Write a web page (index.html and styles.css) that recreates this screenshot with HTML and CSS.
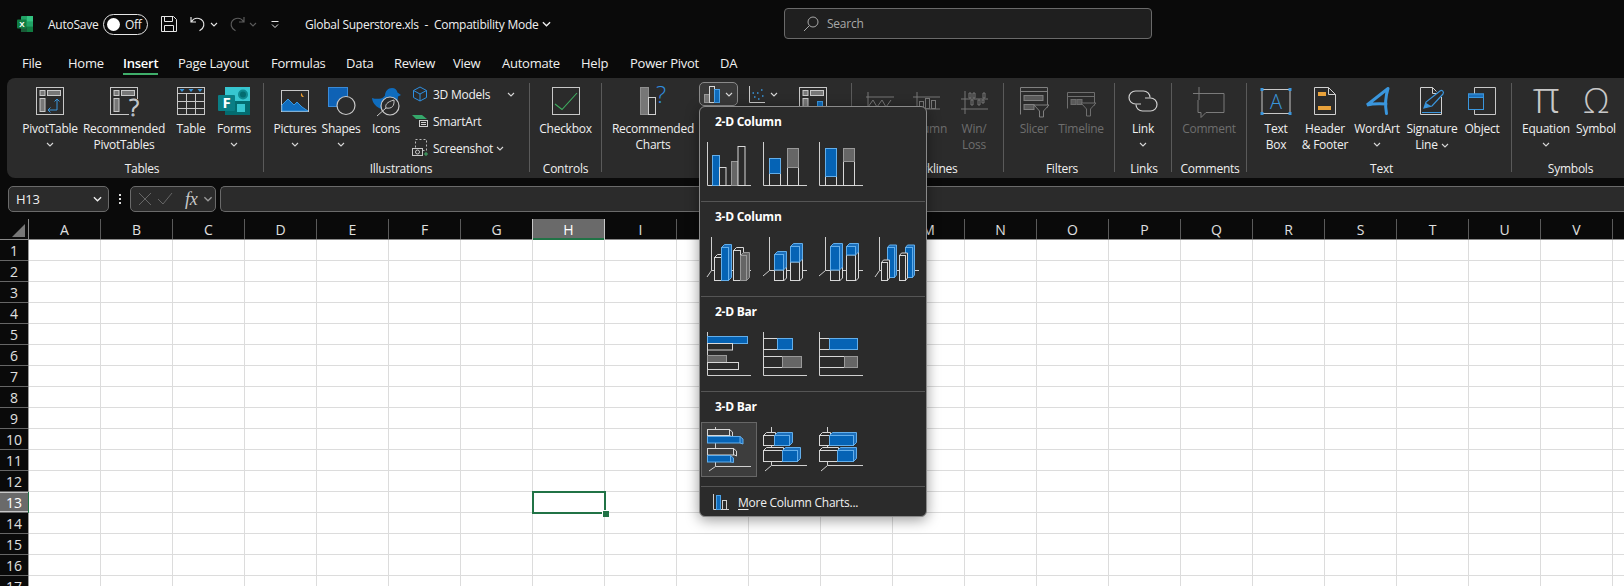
FILE: index.html
```html
<!DOCTYPE html>
<html lang="en">
<head>
  <meta charset="UTF-8">
  <title>Global Superstore.xls - Excel</title>
  <link rel="stylesheet" href="styles.css">
</head>
<body>
  <svg class="defs" width="0" height="0">
    <defs>
      <symbol id="chev" viewBox="0 0 8 5"><path d="M1 1l3 3 3-3" fill="none" stroke="currentColor" stroke-width="1.1"/></symbol>
    </defs>
  </svg>

  <header class="titlebar">
    <svg class="logo" width="16" height="16" viewBox="0 0 16 16">
      <rect x="4" width="12" height="16" rx="1" fill="#21a366"/>
      <rect x="10" width="6" height="5.4" fill="#33c481"/>
      <rect x="10" y="10.6" width="6" height="5.4" fill="#107c41"/>
      <rect x="4" y="10.6" width="6" height="5.4" fill="#185c37"/>
      <rect y="3.5" width="9.5" height="9" rx="1" fill="#107c41"/>
      <text x="4.7" y="10.8" class="logo-x">X</text>
    </svg>
    <span class="autosave">AutoSave</span>
    <span class="toggle"><i class="knob"></i>Off</span>
    <svg class="qa-save" width="16" height="16" viewBox="0 0 16 16" fill="none" stroke="#e6e6e6"><path d="M.5.5h12l3 3v12H.5zM3.5.5v5h8v-5M3.5 15.500v-6h9v6"/></svg>
    <svg class="qa-undo" width="16" height="16" viewBox="0 0 16 16" fill="none" stroke="#e6e6e6" stroke-width="1.2"><path d="M1 1v5h5M1.3 6C3 3 6 1.8 9 2.5c3.500.8 5.500 4 4.700 7.300-.5 2.300-2.300 4-4.200 5"/></svg>
    <svg class="qa-chev" width="8" height="5"><use href="#chev"/></svg>
    <svg class="qa-redo" width="16" height="16" viewBox="0 0 16 16" fill="none" stroke="#5c5c5c" stroke-width="1.2"><path d="M15 1v5h-5M14.700 6C13 3 10 1.800 7 2.500 3.500 3.300 1.500 6.500 2.300 9.800c.5 2.300 2.300 4 4.200 5"/></svg>
    <svg class="qa-chev dim" width="8" height="5"><use href="#chev"/></svg>
    <svg class="qa-custom" width="10" height="9" viewBox="0 0 10 9" fill="none" stroke="#e6e6e6"><path d="M1.500 1.500h7M2 4.500l3 3 3-3"/></svg>
    <span class="doc-title">Global Superstore.xls&nbsp; - &nbsp;Compatibility Mode</span>
    <svg class="doc-chev" width="11" height="6"><use href="#chev"/></svg>
    <div class="search">
      <svg width="16" height="16" viewBox="0 0 16 16" fill="none" stroke="#a8a8a8"><circle cx="10" cy="6" r="5"/><path d="M6.300 9.700L1 15"/></svg>
      <span>Search</span>
    </div>
  </header>

  <nav class="tabs">
    <a class="tab-file">File</a>
    <a class="tab-home">Home</a>
    <a class="tab-insert active">Insert</a>
    <a class="tab-layout">Page Layout</a>
    <a class="tab-formulas">Formulas</a>
    <a class="tab-data">Data</a>
    <a class="tab-review">Review</a>
    <a class="tab-view">View</a>
    <a class="tab-automate">Automate</a>
    <a class="tab-help">Help</a>
    <a class="tab-pivot">Power Pivot</a>
    <a>DA</a>
  </nav>

  <section class="ribbon">
    <!-- Tables -->
    <div class="group g-tables">
      <div class="cmds">
        <div class="cmd w58">
          <svg class="ico" viewBox="0 0 32 30" fill="none" stroke="#c8c8c8"><rect x="2.5" y=".5" width="27" height="27"/><rect x="6" y="3.5" width="5" height="5" fill="#777"/><rect x="13.5" y="3.5" width="13" height="5" fill="#777"/><rect x="6" y="11.5" width="5" height="13" fill="#777"/><path d="M23 12v11h-9M20.500 14.500L23 12l2.500 2.500M16.500 20.500L14 23l2.500 2.500" stroke="#3a96dd"/></svg>
          <span>PivotTable</span><svg class="chev" width="8" height="5"><use href="#chev"/></svg>
        </div>
        <div class="cmd w90">
          <svg class="ico" viewBox="0 0 32 30" fill="none" stroke="#c8c8c8"><rect x="2.5" y=".5" width="27" height="27"/><rect x="6" y="3.5" width="5" height="5" fill="#777"/><rect x="13.5" y="3.500" width="13" height="5" fill="#777"/><rect x="6" y="11.5" width="5" height="13" fill="#777"/><rect x="21" y="12" width="11" height="18" fill="#2b2b2b" stroke="none"/><text x="21" y="29" class="qmark">?</text></svg>
          <span>Recommended PivotTables</span>
        </div>
        <div class="cmd w44">
          <svg class="ico" viewBox="0 0 32 30" fill="none" stroke="#c8c8c8"><rect x="2.5" y=".5" width="27" height="27"/><path d="M2.500 6.500h27M2.500 14.500h27M2.500 21.500h27M11.500 6.500v21M20.500 6.500v21"/><path d="M4.500 2h5L7 5zM13.500 2h5L16 5zM22.500 2h5L25 5z" fill="#3a96dd" stroke="none"/></svg>
          <span>Table</span>
        </div>
        <div class="cmd w42">
          <svg class="ico" viewBox="0 0 32 30"><rect x="7" y="0" width="25" height="14" fill="#37c6d0"/><rect x="7" y="14" width="25" height="14" fill="#036c70"/><circle cx="25" cy="7.5" r="5" fill="#0f8a90"/><circle cx="25" cy="7.5" r="3" fill="#036c70"/><rect x="19" y="17" width="8" height="8" fill="#37c6d0"/><rect x="0" y="8" width="17" height="16" rx="1" fill="#0a7e85"/><text x="4.5" y="21" class="forms-f">F</text></svg>
          <span>Forms</span><svg class="chev" width="8" height="5"><use href="#chev"/></svg>
        </div>
      </div>
      <div class="glabel">Tables</div>
    </div>
    <!-- Illustrations -->
    <div class="group g-illus">
      <div class="cmds">
        <div class="cmd w44">
          <svg class="ico" viewBox="0 0 32 30" fill="none" stroke="#c8c8c8"><rect x="2.5" y="3.5" width="27" height="21"/><path d="M3 24v-6l6-6 6 6 3-3 5 5 6 4z" fill="#0f6cbd" stroke="#3a96dd"/><path d="M23 6c-1.500.8-1.500 3 0 3.800.8.4 1.800.2 2.300-.3-1.500 0-2.500-2-2.300-3.500z" fill="#f0a030" stroke="none"/></svg>
          <span>Pictures</span><svg class="chev" width="8" height="5"><use href="#chev"/></svg>
        </div>
        <div class="cmd w48">
          <svg class="ico" viewBox="0 0 32 30" fill="none"><rect x="3.5" y=".5" width="19" height="19" fill="#0f62b5" stroke="#3a8bd8"/><circle cx="21" cy="18.5" r="9" fill="#2b2b2b" stroke="#c8c8c8" stroke-width="1.2"/></svg>
          <span>Shapes</span><svg class="chev" width="8" height="5"><use href="#chev"/></svg>
        </div>
        <div class="cmd w42">
          <svg class="ico" viewBox="0 0 32 30" fill="none"><path d="M2 11c3 1 6 1 9 .5 2-.5 3-2 4-3 0-4 3-7.500 7-7.500 3 0 5 2 5.500 4.500L31 8l-3 1.500c0 4-1.500 8-5 11-2 1.500-9 3-13 1-5-2.500-7.500-6-8-10.500z" fill="#0f6cbd"/><circle cx="20" cy="19" r="9" fill="#2b2b2b" stroke="#c8c8c8" stroke-width="1.2"/><path d="M7 29l9-8M16 21c-1-3 .5-6 8-8 .5 6-2 9-8 8z" stroke="#c8c8c8" fill="#2b2b2b"/></svg>
          <span>Icons</span>
        </div>
        <div class="stack">
          <div class="mini">
            <svg width="16" height="16" viewBox="0 0 16 16" fill="none" stroke="#2f8fe0"><path d="M8 1l6.500 3.500v7L8 15l-6.500-3.500v-7zM1.500 4.500L8 8l6.500-3.500M8 8v7"/></svg>
            <span>3D Models</span><svg class="chev far" width="8" height="5"><use href="#chev"/></svg>
          </div>
          <div class="mini">
            <svg width="16" height="16" viewBox="0 0 16 16" fill="none"><path d="M0 2h10l5 4H4z" fill="#35a86b"/><rect x="7.5" y="7.5" width="8" height="6" fill="#2b2b2b" stroke="#d0d0d0"/><path d="M9 9.500h5M9 11.500h5" stroke="#d0d0d0"/></svg>
            <span>SmartArt</span>
          </div>
          <div class="mini">
            <svg width="16" height="18" viewBox="0 0 16 18" fill="none"><rect x="3.5" y=".5" width="11" height="11" stroke="#b8b8b8" stroke-dasharray="2 2"/><rect x=".5" y="9.5" width="10" height="7" fill="#2b2b2b" stroke="#c8c8c8"/><circle cx="5.5" cy="13" r="2" stroke="#c8c8c8"/><path d="M12 15h4M14 13v4" stroke="#45b06c"/></svg>
            <span>Screenshot</span><svg class="chev near" width="8" height="5"><use href="#chev"/></svg>
          </div>
        </div>
      </div>
      <div class="glabel">Illustrations</div>
    </div>
    <!-- Controls -->
    <div class="group g-controls">
      <div class="cmds">
        <div class="cmd w71">
          <svg class="ico" viewBox="0 0 32 30" fill="none"><rect x="2.5" y=".5" width="27" height="27" stroke="#c8c8c8"/><path d="M5 17l7 5.500L27 6" stroke="#3fae60" stroke-width="1.100"/></svg>
          <span>Checkbox</span>
        </div>
      </div>
      <div class="glabel">Controls</div>
    </div>
    <!-- Charts, mostly under the open menu -->
    <div class="group g-charts">
      <div class="cmds">
        <div class="cmd w92">
          <svg class="ico" viewBox="0 0 32 30" fill="none"><rect x="3.5" y=".5" width="8" height="27" fill="#777" stroke="#909090"/><rect x="11.5" y="10.5" width="7" height="17" stroke="#d0d0d0"/><text x="19" y="16" class="qmark">?</text></svg>
          <span>Recommended Charts</span>
        </div>
        <div class="chart-mini">
          <div class="tool open">
            <svg width="16" height="17" viewBox="0 0 16 17" fill="none"><rect x=".5" y="8.5" width="5" height="8" fill="#777" stroke="#999"/><rect x="5.5" y=".5" width="5" height="16" stroke="#d8d8d8"/><rect x="10.500" y="3.5" width="5" height="13" fill="#0f6cbd" stroke="#4da3e8"/></svg>
            <svg class="chev" width="8" height="5"><use href="#chev"/></svg>
          </div>
          <div class="tool">
            <svg width="16" height="17" viewBox="0 0 16 17" fill="none"><path d="M.5 0v16.500H16" stroke="#c8c8c8"/><path d="M5 11h1.500M8 7h1.500M3.500 7h1.500M9 13h1.500M12 4h1.500M13 10h1.500" stroke="#3a96dd" stroke-width="1.500"/></svg>
            <svg class="chev" width="8" height="5"><use href="#chev"/></svg>
          </div>
        </div>
        <div class="cmd w60">
          <svg class="ico" viewBox="0 0 32 30" fill="none" stroke="#c8c8c8"><rect x="2.5" y=".5" width="27" height="27"/><rect x="6" y="3.5" width="5" height="5" fill="#777"/><rect x="13.5" y="3.5" width="13" height="5" fill="#777"/><rect x="6" y="11.5" width="5" height="13" fill="#777"/><rect x="20.5" y="14.5" width="5" height="13" fill="#0f6cbd" stroke="#3a96dd"/></svg>
        </div>
      </div>
      <div class="glabel"></div>
    </div>
    <!-- Sparklines -->
    <div class="group g-spark off">
      <div class="cmds">
        <div class="cmd w46">
          <svg class="ico" viewBox="0 0 32 30" fill="none" stroke="#777"><path d="M4 5v22M2 10h28M4 20l5-7 4 7 5-7 4 7 5-7"/></svg>
        </div>
        <div class="cmd w46">
          <svg class="ico" viewBox="0 0 32 30" fill="none" stroke="#777"><path d="M7 5v22M3 10h27M3 22h27"/><rect x="9.5" y="14.5" width="4" height="7"/><rect x="15.5" y="11.5" width="4" height="10"/><rect x="21.5" y="13.5" width="4" height="8"/></svg>
          <span>Column</span>
        </div>
        <div class="cmd w50">
          <svg class="ico" viewBox="0 0 32 30" fill="none" stroke="#777"><path d="M7 4v23M3 12h27M3 22h27M11 6v5h2V6zM15 6v5h2V6zM25 6v5h2V6zM20 13v5h2v-5zM24 13v3h2v-3zM13 13v5h2v-5z"/></svg>
          <span>Win/ Loss</span>
        </div>
      </div>
      <div class="glabel">Sparklines</div>
    </div>
    <!-- Filters -->
    <div class="group g-filters off">
      <div class="cmds">
        <div class="cmd w48">
          <svg class="ico" viewBox="0 0 32 30" fill="none" stroke="#808080"><path d="M2.500 27.500V.5h27v20M2.500 4.500h27"/><rect x="6" y="8.5" width="19" height="5" fill="#5a5a5a"/><rect x="6" y="17.5" width="10" height="5" fill="#5a5a5a"/><path d="M16 18h15l-5.500 6v6h-4v-6z" fill="#2b2b2b"/></svg>
          <span>Slicer</span>
        </div>
        <div class="cmd w46">
          <svg class="ico" viewBox="0 0 32 30" fill="none" stroke="#6e6e6e"><path d="M2.500 21.500V5.500h27v13M2.500 9.500h27"/><rect x="6" y="12.5" width="5" height="5" fill="#5a5a5a"/><rect x="12" y="12.5" width="5" height="5" fill="#5a5a5a"/><path d="M16 16h15l-5.500 6v7h-4v-7z" fill="#2b2b2b"/></svg>
          <span>Timeline</span>
        </div>
      </div>
      <div class="glabel">Filters</div>
    </div>
    <!-- Links -->
    <div class="group g-links">
      <div class="cmds">
        <div class="cmd w52">
          <svg class="ico" viewBox="0 0 32 30" fill="none" stroke="#d0d0d0" stroke-width="1.2"><path d="M14 17H8.500a6.500 6.500 0 0 1 0-13h8a6.500 6.500 0 0 1 6.500 6.500"/><path d="M18 11h5.500a6.500 6.500 0 0 1 0 13h-8a6.500 6.500 0 0 1-6.500-6.500"/></svg>
          <span>Link</span><svg class="chev" width="8" height="5"><use href="#chev"/></svg>
        </div>
      </div>
      <div class="glabel">Links</div>
    </div>
    <!-- Comments -->
    <div class="group g-comments">
      <div class="cmds">
        <div class="cmd w70 off">
          <svg class="ico" viewBox="0 0 32 30" fill="none" stroke="#7a7a7a"><path d="M8 6.500h23v19H13l-5 5v-5H5V13"/><path d="M6 0v13M0 6.500h13"/></svg>
          <span>Comment</span>
        </div>
      </div>
      <div class="glabel">Comments</div>
    </div>
    <!-- Text -->
    <div class="group g-text">
      <div class="cmds">
        <div class="cmd w48">
          <svg class="ico" viewBox="0 0 32 30" fill="none"><rect x="2" y="2.5" width="28" height="24" stroke="#c8c8c8"/><path d="M.5 1h3v3h-3zM28.500 1h3v3h-3zM.5 25h3v3h-3zM28.500 25h3v3h-3z" fill="#3a96dd"/><text x="16" y="22" class="tb-a">A</text></svg>
          <span>Text<br>Box</span>
        </div>
        <div class="cmd w50">
          <svg class="ico" viewBox="0 0 32 30" fill="none"><path d="M5.500.5h14l7 7v20h-21zM19.500.5v7h7" stroke="#d0d0d0" fill="#2b2b2b"/><rect x="9" y="5" width="8" height="4" fill="#e9a23b"/><rect x="9" y="19" width="13" height="4" fill="#e9a23b"/></svg>
          <span>Header<br>&amp; Footer</span>
        </div>
        <div class="cmd w54">
          <svg class="ico" viewBox="0 0 32 30" fill="none" stroke="#3a96dd" stroke-width="3" stroke-linecap="round"><path d="M27 1.500L6 18c6-1.500 12-1.500 19-1M27 1.500c-2.500 8-3 17-1.500 25"/></svg>
          <span>WordArt</span><svg class="chev" width="8" height="5"><use href="#chev"/></svg>
        </div>
        <div class="cmd w56 sig">
          <svg class="ico" viewBox="0 0 32 30" fill="none"><path d="M25.500 10v17.500h-21V.5h12l4 4" stroke="#d0d0d0"/><path d="M16.500.5v6h6" stroke="#d0d0d0"/><path d="M8 21l2-6L24 4c2-1.500 4.500 1 3 3L16 19z" stroke="#3a96dd" stroke-width="1.2" fill="#2b2b2b"/><path d="M8 21l2-5 5 3z" fill="#3a96dd"/><path d="M6 25.500h19" stroke="#3a96dd"/></svg>
          <span>Signature Line<svg class="chev inl" width="8" height="5"><use href="#chev"/></svg></span>
        </div>
        <div class="cmd w44">
          <svg class="ico" viewBox="0 0 32 30" fill="none"><path d="M8.500 7V.5h21v27h-21V23" stroke="#c8c8c8"/><rect x="2.5" y="7" width="15" height="15.5" fill="#2b2b2b" stroke="#3a96dd"/><rect x="2.5" y="7" width="15" height="3.5" fill="#1b6fba" stroke="#3a96dd"/></svg>
          <span>Object</span>
        </div>
      </div>
      <div class="glabel">Text</div>
    </div>
    <!-- Symbols -->
    <div class="group g-symbols">
      <div class="cmds">
        <div class="cmd w54">
          <svg class="ico" viewBox="0 0 32 30"><text x="16" y="26" class="sym-pi">π</text></svg>
          <span>Equation</span><svg class="chev" width="8" height="5"><use href="#chev"/></svg>
        </div>
        <div class="cmd w46">
          <svg class="ico" viewBox="0 0 32 30"><text x="16" y="26" class="sym-om">Ω</text></svg>
          <span>Symbol</span>
        </div>
      </div>
      <div class="glabel">Symbols</div>
    </div>
  </section>

  <section class="fbar">
    <div class="namebox"><span>H13</span><svg width="11" height="6"><use href="#chev"/></svg></div>
    <div class="dots"><i></i><i></i><i></i></div>
    <div class="fbtns">
      <svg width="14" height="14" viewBox="0 0 14 14" stroke="#666" fill="none"><path d="M1 1l12 12M13 1L1 13"/></svg>
      <svg width="16" height="14" viewBox="0 0 16 14" stroke="#666" fill="none"><path d="M1 7l5 5L15 1"/></svg>
      <em>fx</em>
      <svg width="10" height="6"><use href="#chev"/></svg>
    </div>
    <div class="finput"></div>
  </section>

  <main class="sheet">
    <div class="colhead">
      <div class="corner"><i></i></div>
      <div>A</div><div>B</div><div>C</div><div>D</div><div>E</div><div>F</div><div>G</div><div class="sel">H</div><div>I</div><div></div><div></div><div></div><div>M</div><div>N</div><div>O</div><div>P</div><div>Q</div><div>R</div><div>S</div><div>T</div><div>U</div><div>V</div><div></div>
    </div>
    <div class="body">
      <div class="rowhead">
        <div>1</div><div>2</div><div>3</div><div>4</div><div>5</div><div>6</div><div>7</div><div>8</div><div>9</div><div>10</div><div>11</div><div>12</div><div class="sel">13</div><div>14</div><div>15</div><div>16</div><div>17</div>
      </div>
      <div class="cells"><div class="cursor"><i></i></div></div>
    </div>
  </main>

  <!-- chart dropdown -->
  <div class="menu">
    <h4>2-D Column</h4>
    <div class="tiles">
      <div class="tile"><svg viewBox="0 0 44 44"><path class="ax" d="M.5 0v43.500H44"/><rect class="bl" x="5.5" y="13.5" width="7" height="30"/><rect class="wh" x="12.5" y="25.5" width="6.5" height="18"/><rect class="gr" x="24.5" y="19.5" width="6.5" height="24"/><rect class="wh" x="31" y="4.5" width="7" height="39"/></svg></div>
      <div class="tile"><svg viewBox="0 0 44 44"><path class="ax" d="M.5 0v43.500H44"/><rect class="wh" x="6.5" y="31" width="11" height="12.5"/><rect class="bl" x="6.5" y="16.5" width="11" height="15"/><rect class="wh" x="24.5" y="25" width="11" height="18.5"/><rect class="gr" x="24.5" y="6.5" width="11" height="19"/></svg></div>
      <div class="tile"><svg viewBox="0 0 44 44"><path class="ax" d="M.5 0v43.500H44"/><rect class="wh" x="6.5" y="34" width="11" height="9.5"/><rect class="bl" x="6.5" y="6.5" width="11" height="28"/><rect class="wh" x="24.5" y="19" width="11" height="24.5"/><rect class="gr" x="24.5" y="6.5" width="11" height="13"/></svg></div>
    </div>
    <hr>
    <h4>3-D Column</h4>
    <div class="tiles">
      <div class="tile"><svg viewBox="0 0 44 44"><path class="ax" d="M4.500 0v33.500H44M4.500 33.500L0 40"/>
        <path class="wh" d="M7.500 20.500l3-3h7v23l-3 3v-23z"/><rect class="wh" x="7.5" y="20.5" width="7" height="23"/>
        <path class="bl2" d="M14.500 10.500l3-3h7v33l-3 3v-33z"/><rect class="bl" x="14.5" y="10.5" width="7" height="33"/>
        <path class="wh" d="M26.500 13.500l3-3h7v30l-3 3v-30z"/><rect class="wh" x="26.5" y="13.5" width="7" height="30"/>
        <path class="gr" d="M33.500 18.500l3-3h6v25l-3 3v-25z"/><rect class="gr" x="33.5" y="18.5" width="6" height="25"/></svg></div>
      <div class="tile"><svg viewBox="0 0 44 44"><path class="ax" d="M6.500 0v33.500H44M6.500 33.500L0 39"/>
        <path class="wh" d="M11.500 33l3-3h9v11l-3 3V33z"/><rect class="wh" x="11.5" y="33" width="9" height="10.500"/>
        <path class="bl2" d="M11.500 17.500l3-3h9V30l-3 3V17.500z"/><rect class="bl" x="11.5" y="17.5" width="9" height="15.5"/>
        <path class="wh" d="M27.500 25l3-3h9v19l-3 3V25z"/><rect class="wh" x="27.5" y="25" width="9" height="18.5"/>
        <path class="bl2" d="M27.500 9.500l3-3h9V22l-3 3V9.500z"/><rect class="bl" x="27.5" y="9.5" width="9" height="15.5"/></svg></div>
      <div class="tile"><svg viewBox="0 0 44 44"><path class="ax" d="M6.500 0v33.500H44M6.500 33.500L0 39"/>
        <path class="wh" d="M11.500 33l3-3h9v11l-3 3V33z"/><rect class="wh" x="11.5" y="33" width="9" height="10.500"/>
        <path class="bl2" d="M11.500 9.500l3-3h9V30l-3 3V9.500z"/><rect class="bl" x="11.5" y="9.5" width="9" height="23.5"/>
        <path class="wh" d="M27.500 18l3-3h9v26l-3 3V18z"/><rect class="wh" x="27.5" y="18" width="9" height="25.5"/>
        <path class="bl2" d="M27.500 9.500l3-3h9V15l-3 3V9.500z"/><rect class="bl" x="27.5" y="9.5" width="9" height="8.5"/></svg></div>
      <div class="tile"><svg viewBox="0 0 44 44"><path class="ax" d="M4.500 0v33.500H44M4.500 33.500L0 40"/>
        <path class="bl2" d="M12.500 10.500l2-2.500h7v30l-2 2.500V10.500z"/><rect class="bl" x="12.5" y="10.5" width="7" height="30"/>
        <path class="wh" d="M6.500 25.500l2-2.500h6v18l-2 2.500V25.500z"/><rect class="wh" x="6.500" y="25.5" width="6" height="18"/>
        <path class="bl2" d="M30.500 10.500l2-2.500h7v30l-2 2.500V10.500z"/><rect class="bl" x="30.5" y="10.5" width="7" height="30"/>
        <path class="wh" d="M24.500 18.500l2-2.500h6v25l-2 2.500V18.500z"/><rect class="wh" x="24.500" y="18.5" width="6" height="25"/></svg></div>
    </div>
    <hr>
    <h4>2-D Bar</h4>
    <div class="tiles">
      <div class="tile"><svg viewBox="0 0 44 44"><path class="ax" d="M.5 0v43.500H44"/><rect class="bl" x=".5" y="4.5" width="40" height="7"/><rect class="wh" x=".5" y="11.5" width="25" height="6.5"/><rect class="gr" x=".5" y="23.5" width="19" height="7"/><rect class="wh" x=".5" y="30.5" width="31" height="7"/></svg></div>
      <div class="tile"><svg viewBox="0 0 44 44"><path class="ax" d="M.5 0v43.500H44"/><rect class="wh" x=".5" y="6.5" width="14" height="11"/><rect class="bl" x="14.5" y="6.5" width="15" height="11"/><rect class="wh" x=".5" y="24.5" width="19" height="11"/><rect class="gr" x="19.5" y="24.5" width="19" height="11"/></svg></div>
      <div class="tile"><svg viewBox="0 0 44 44"><path class="ax" d="M.5 0v43.500H44"/><rect class="wh" x=".5" y="6.5" width="10" height="11"/><rect class="bl" x="10.5" y="6.5" width="28" height="11"/><rect class="wh" x=".5" y="24.5" width="25" height="11"/><rect class="gr" x="25.5" y="24.5" width="13" height="11"/></svg></div>
    </div>
    <hr>
    <h4>3-D Bar</h4>
    <div class="tiles">
      <div class="tile hot"><svg viewBox="0 0 44 44"><path class="ax" d="M8.500 0v39.500H44M8.500 39.500L2 44"/>
        <path class="wh" d="M.5 2.500h22l3 2.500v5l-3-1.500"/><rect class="wh" x=".5" y="2.5" width="22" height="6"/>
        <path class="bl2" d="M33 9.500l3 2.500v5l-3-1"/><rect class="bl" x=".5" y="9.5" width="32.5" height="6.5"/>
        <path class="wh" d="M.5 21.500h26l3 2.500v5l-3-1.500"/><rect class="wh" x=".5" y="21.5" width="26" height="6.5"/>
        <path class="bl2" d="M23.500 28.500l3 2.500v4.500l-3-.5"/><rect class="bl" x=".5" y="28.5" width="23" height="6.5"/></svg></div>
      <div class="tile"><svg viewBox="0 0 44 44"><path class="ax" d="M8.500 0v38.500H44M8.500 38.500L2 44"/>
        <path class="wh" d="M.5 8.500l3-3h9v10l-3 3H.5z"/><rect class="wh" x=".5" y="8.5" width="11" height="10"/>
        <path class="bl2" d="M11.500 8.500l3-3h15v10l-3 3V8.500z"/><rect class="bl" x="11.5" y="8.5" width="15" height="10"/>
        <path class="wh" d="M.5 23.500l3-3h17v11l-3 3H.5z"/><rect class="wh" x=".5" y="23.5" width="19" height="11"/>
        <path class="bl2" d="M19.500 23.500l3-3h15v11l-3 3V23.500z"/><rect class="bl" x="19.5" y="23.5" width="15" height="11"/></svg></div>
      <div class="tile"><svg viewBox="0 0 44 44"><path class="ax" d="M8.500 0v38.500H44M8.500 38.500L2 44"/>
        <path class="wh" d="M.5 8.500l3-3h8v10l-3 3H.5z"/><rect class="wh" x=".5" y="8.5" width="10" height="10"/>
        <path class="bl2" d="M10.500 8.500l3-3h24v10l-3 3V8.500z"/><rect class="bl" x="10.5" y="8.5" width="24" height="10"/>
        <path class="wh" d="M.5 23.500l3-3h16v11l-3 3H.5z"/><rect class="wh" x=".5" y="23.5" width="18" height="11"/>
        <path class="bl2" d="M18.500 23.500l3-3h16v11l-3 3V23.500z"/><rect class="bl" x="18.5" y="23.5" width="16" height="11"/></svg></div>
    </div>
    <hr>
    <div class="more">
      <svg width="16" height="16" viewBox="0 0 16 16" fill="none"><path d="M.5 0v15.500H16" stroke="#d0d0d0"/><rect x="3.5" y="1.5" width="4" height="14" fill="#0f6cbd" stroke="#4da3e8"/><rect x="9.5" y="6.5" width="4" height="9" stroke="#d0d0d0"/></svg>
      <span><u>M</u>ore Column Charts...</span>
    </div>
  </div>
</body>
</html>
```
FILE: styles.css
```css
* {
  box-sizing: border-box;
}
html, body {
  height: 586px;
  overflow: hidden;
}
body {
  margin: 0;
  position: relative;
  background: #0a0a0a;
  color: #f0f0f0;
  font-family: "Open Sans", "Noto Sans", sans-serif;
  font-size: 12px;
  letter-spacing: -0.25px;
}
.defs {
  position: absolute;
}
svg {
  display: block;
  flex: none;
}

/* title bar */
.titlebar {
  height: 48px;
  display: flex;
  align-items: center;
  padding-left: 17px;
}
.logo-x {
  font: bold 8px "Liberation Sans", sans-serif;
  fill: #fff;
  text-anchor: middle;
}
.autosave {
  width: 48px;
  margin-left: 15px;
}
.toggle {
  width: 45px;
  height: 21px;
  margin-left: 7px;
  border: 1px solid #e6e6e6;
  border-radius: 11px;
  display: flex;
  align-items: center;
  padding: 0 3px;
  gap: 5px;
}
.knob {
  width: 13px;
  height: 13px;
  border-radius: 50%;
  background: #fff;
}
.qa-save { margin-left: 13px; }
.qa-undo { margin-left: 13px; }
.qa-chev { margin-left: 4px; color: #e6e6e6; }
.qa-chev.dim { color: #5c5c5c; }
.qa-redo { margin-left: 11px; }
.qa-custom { margin-left: 13px; }
.doc-title {
  width: 233px;
  margin-left: 25px;
  white-space: nowrap;
}
.doc-chev {
  margin-left: 3px;
  color: #f0f0f0;
}
.search {
  margin-left: 232px;
  width: 368px;
  height: 31px;
  margin-top: -1px;
  background: #1f1f1f;
  border: 1px solid #6a6a6a;
  border-radius: 4px;
  display: flex;
  align-items: center;
  gap: 8px;
  padding-left: 18px;
  color: #a8a8a8;
}

/* tabs */
.tabs {
  height: 30px;
  display: flex;
  align-items: center;
  padding-left: 22px;
  font-size: 13px;
}
.tabs a {
  position: relative;
  line-height: 20px;
  white-space: nowrap;
}
.tabs .active {
  font-weight: 600;
  color: #fff;
}
.tabs .active::after {
  content: "";
  position: absolute;
  left: 0;
  right: 0;
  bottom: -2px;
  height: 2px;
  background: #3fae6a;
}
.tab-file { width: 46px; }
.tab-home { width: 55px; }
.tab-insert { width: 35px; margin-right: 20px; }
.tab-layout { width: 93px; }
.tab-formulas { width: 75px; }
.tab-data { width: 48px; }
.tab-review { width: 59px; }
.tab-view { width: 49px; }
.tab-automate { width: 79px; }
.tab-help { width: 49px; }
.tab-pivot { width: 90px; }

/* ribbon */
.ribbon {
  height: 100px;
  margin-left: 7px;
  background: #2b2b2b;
  border-radius: 8px 0 0 8px;
  display: flex;
  padding-top: 5px;
}
.group {
  height: 89px;
  border-right: 1px solid #5a5a5a;
  display: flex;
  flex-direction: column;
  flex: none;
}
.g-tables { width: 257px; padding-left: 14px; }
.g-illus { width: 266px; padding-left: 9px; }
.g-controls { width: 72px; }
.g-charts { width: 250px; padding-left: 5px; }
.g-spark { width: 152px; padding-left: 5px; }
.g-filters { width: 111px; padding-left: 6px; }
.g-links { width: 57px; padding-left: 2px; }
.g-comments { width: 75px; padding-left: 2px; }
.g-text { width: 265px; padding-left: 5px; }
.g-symbols { width: 110px; padding-left: 7px; border-right: 0; }
.cmds {
  display: flex;
  height: 78px;
  flex: none;
}
.glabel {
  text-align: center;
  line-height: 16px;
  white-space: nowrap;
}
.cmd {
  display: flex;
  flex-direction: column;
  align-items: center;
  text-align: center;
  line-height: 16px;
  padding-top: 4px;
  flex: none;
}
.cmd .ico {
  width: 32px;
  height: 30px;
  margin-bottom: 4px;
  overflow: visible;
}
.chev {
  color: #d8d8d8;
  margin-top: 5px;
}
.chev.inl {
  display: inline-block;
  margin: 0 0 1px 3px;
}
.w42 { width: 42px; }
.w44 { width: 44px; }
.w46 { width: 46px; }
.w48 { width: 48px; }
.w50 { width: 50px; }
.w52 { width: 52px; }
.w54 { width: 54px; }
.w56 { width: 56px; }
.w58 { width: 58px; }
.w60 { width: 60px; }
.w70 { width: 70px; }
.w71 { width: 71px; }
.w90 { width: 90px; }
.w92 { width: 92px; }
.off .cmd, .cmd.off {
  color: #6e6e6e;
}
.qmark {
  font: 300 24px "Open Sans", sans-serif;
  fill: #2f8fe0;
}
.forms-f {
  font: bold 15px "Open Sans", sans-serif;
  fill: #fff;
}
.tb-a {
  font: 300 20px "Open Sans", sans-serif;
  fill: #3a96dd;
  text-anchor: middle;
}
.sym-pi {
  font: 300 44px "Open Sans", sans-serif;
  fill: #c8c8c8;
  text-anchor: middle;
}
.sym-om {
  font: 300 34px "Open Sans", sans-serif;
  fill: #c8c8c8;
  text-anchor: middle;
}
.stack {
  width: 118px;
  padding: 1px 0 0 5px;
  display: flex;
  flex-direction: column;
  gap: 7px;
}
.mini {
  height: 20px;
  display: flex;
  align-items: center;
  gap: 5px;
  white-space: nowrap;
}
.mini .chev {
  margin: 0;
}
.mini .far {
  margin-left: 12px;
}
.mini .near {
  margin-left: -2px;
}
.chart-mini {
  width: 84px;
  display: flex;
  gap: 6px;
  align-items: flex-start;
  height: 24px;
  margin-top: -1px;
}
.tool {
  height: 24px;
  display: flex;
  align-items: center;
  gap: 5px;
  padding: 0 4px;
  border: 1px solid transparent;
  border-radius: 5px;
}
.tool .chev {
  margin: 0;
}
.tool.open {
  width: 40px;
  background: #3a3a3a;
  border-color: #8a8a8a;
}

/* formula bar */
.fbar {
  height: 26px;
  margin: 8px 0 0 8px;
  display: flex;
  color: #d0d0d0;
}
.namebox, .fbtns, .finput {
  height: 26px;
  border: 1px solid #6a6a6a;
  border-radius: 5px;
  background: #2b2b2b;
  display: flex;
  align-items: center;
}
.namebox {
  width: 101px;
  padding: 0 5px 0 7px;
  justify-content: space-between;
  font-size: 13px;
  color: #f0f0f0;
}
.dots {
  width: 21px;
  display: flex;
  flex-direction: column;
  align-items: center;
  justify-content: center;
  gap: 2px;
}
.dots i {
  width: 2px;
  height: 2px;
  background: #ddd;
}
.fbtns {
  width: 86px;
  padding-left: 7px;
  gap: 5px;
  color: #9a9a9a;
}
.fbtns em {
  font: italic 18px "Liberation Serif", serif;
  color: #c8c8c8;
  margin-left: 7px;
}
.finput {
  flex: 1;
  margin-left: 4px;
  border-right: 0;
  border-radius: 5px 0 0 5px;
}

/* sheet */
.sheet {
  margin-top: 7px;
}
.colhead {
  height: 21px;
  display: flex;
  color: #e0e0e0;
  font-size: 14px;
  letter-spacing: 0;
  border-bottom: 1px solid #8a8a8a;
}
.colhead > div {
  width: 72px;
  flex: none;
  text-align: center;
  line-height: 22px;
  border-right: 1px solid #5a5a5a;
}
.colhead .corner {
  width: 29px;
  position: relative;
  border-right: 1px solid #8a8a8a;
}
.corner i {
  position: absolute;
  right: 3px;
  bottom: 2px;
  border-style: solid;
  border-width: 0 0 13px 13px;
  border-color: transparent transparent #777 transparent;
}
.colhead .sel {
  height: 21px;
  background: #6a6a6a;
  color: #fff;
  border-right-color: #c8c8c8;
  box-shadow: inset 0 -2px 0 #217346, -1px 0 0 #c8c8c8;
}
.body {
  display: flex;
  height: 347px;
}
.rowhead {
  width: 29px;
  flex: none;
  color: #e0e0e0;
  font-size: 14px;
  letter-spacing: 0;
  border-right: 1px solid #9a9a9a;
}
.rowhead div {
  height: 21px;
  line-height: 21px;
  text-align: center;
  border-bottom: 1px solid #666;
}
.rowhead .sel {
  background: #6a6a6a;
  color: #fff;
  box-shadow: inset 0 1px 0 #c8c8c8, inset 0 -1px 0 #c8c8c8, 1px 0 0 #217346, 2px 0 0 #217346;
}
.cells {
  flex: 1;
  position: relative;
  background-color: #fff;
  background-image:
    repeating-linear-gradient(to right, transparent 0 71px, #dcdcdc 71px 72px),
    repeating-linear-gradient(to bottom, transparent 0 20px, #dcdcdc 20px 21px);
}
.cursor {
  position: absolute;
  left: 503px;
  top: 251px;
  width: 74px;
  height: 23px;
  border: 2px solid #217346;
}
.cursor i {
  position: absolute;
  right: -5px;
  bottom: -5px;
  width: 7px;
  height: 7px;
  background: #217346;
  border: 1px solid #fff;
  border-width: 1px 0 0 1px;
}

/* chart menu */
.menu {
  position: absolute;
  left: 699px;
  top: 106px;
  width: 228px;
  height: 411px;
  background: #2b2b2b;
  border: 1px solid #8a8a8a;
  border-radius: 6px;
  box-shadow: 0 3px 14px rgba(0, 0, 0, 0.4);
}
.menu h4 {
  margin: 0;
  height: 30px;
  padding-left: 15px;
  font-size: 12px;
  font-weight: 700;
  line-height: 30px;
  color: #fff;
}
.menu hr {
  margin: 9px 1px 0;
  border: 0;
  border-top: 1px solid #555;
}
.tiles {
  display: flex;
  height: 55px;
  padding-left: 1px;
}
.tile {
  width: 56px;
  height: 55px;
  padding: 5px 0 0 6px;
  border: 1px solid transparent;
}
.tile svg {
  width: 44px;
  height: 44px;
  margin: -1px 0 0 -1px;
  overflow: visible;
  fill: none;
}
.tile.hot {
  background: #3d3d3d;
  border-color: #666;
}
.ax { stroke: #d0d0d0; }
.wh { stroke: #d8d8d8; fill: #2b2b2b; }
.hot .wh { fill: #3d3d3d; }
.bl { fill: #0563b5; stroke: #63aeea; }
.bl2 { fill: #1c6fbb; stroke: #63aeea; }
.gr { fill: #666; stroke: #999; }
.more {
  height: 30px;
  display: flex;
  align-items: center;
  gap: 9px;
  padding-left: 13px;
}
.more u {
  text-underline-offset: 2px;
}
```
